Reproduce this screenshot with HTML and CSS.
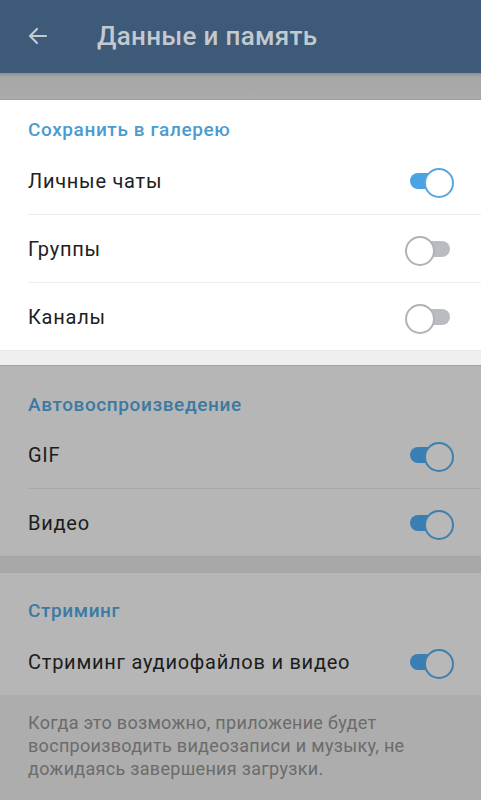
FILE: index.html
```html
<!DOCTYPE html>
<html lang="ru">
<head>
<meta charset="utf-8">
<link rel="stylesheet" href="styles.css">
</head>
<body>
<div class="screen">
  <header class="appbar">
    <svg class="back" width="24" height="24" viewBox="0 0 24 24"><path d="M20 12H5M11 5l-7 7 7 7" fill="none" stroke="currentColor" stroke-width="2.2" stroke-linecap="round" stroke-linejoin="round"/></svg>
    <h1 class="title">Данные и память</h1>
  </header>
  <div class="gap gap-top"></div>
  <section class="section light">
    <div class="sec-title">Сохранить в галерею</div>
    <div class="row"><span>Личные чаты</span><span class="toggle on"></span></div>
    <div class="row"><span>Группы</span><span class="toggle off"></span></div>
    <div class="row last"><span>Каналы</span><span class="toggle off"></span></div>
  </section>
  <div class="gap gap-light"></div>
  <section class="section dim s2">
    <div class="sec-title">Автовоспроизведение</div>
    <div class="row"><span>GIF</span><span class="toggle on"></span></div>
    <div class="row last"><span>Видео</span><span class="toggle on"></span></div>
  </section>
  <div class="gap gap-dim"></div>
  <section class="section dim s3">
    <div class="sec-title">Стриминг</div>
    <div class="row last"><span>Стриминг аудиофайлов и видео</span><span class="toggle on"></span></div>
  </section>
  <p class="hint">Когда это возможно, приложение будет воспроизводить видеозаписи и музыку, не дожидаясь завершения загрузки.</p>
</div>
</body>
</html>
```
FILE: styles.css
```css
* { box-sizing: border-box; }
html, body { margin: 0; padding: 0; }
body {
  width: 481px;
  height: 800px;
  overflow: hidden;
  background: #adadad;
  font-family: Roboto, "Noto Sans", sans-serif;
}
.screen { display: flex; flex-direction: column; }
.appbar {
  height: 73px;
  background: #3d5a78;
  display: flex;
  align-items: center;
  color: #c3c9cf;
  padding-bottom: 2px;
}
.back { margin-left: 26px; width: 24px; height: 24px; }
.title {
  margin: 0 0 0 47px;
  font-size: 26px;
  font-weight: 500;
  letter-spacing: 0.3px;
}
.gap { flex: none; }
.gap-top {
  height: 27px;
  background: linear-gradient(#8f8f8f 0, #a7a7a7 4px, #ababab 100%);
  border-bottom: 1px solid #9d9d9d;
}
.gap-light {
  height: 16px;
  background: #efefef;
  border-top: 1px solid #e6e6e6;
  border-bottom: 1px solid #a2a2a2;
}
.gap-dim {
  height: 17px;
  background: #a8a8a8;
  border-top: 1px solid #a3a3a3;
  border-bottom: 1px solid #a5a5a5;
}
.section { display: flex; flex-direction: column; }
.light { background: #ffffff; color: #212121; }
.dim { background: #b6b6b6; color: #1c1c1c; }
.sec-title {
  padding-left: 28px;
  font-size: 19px;
  font-weight: 500;
  letter-spacing: 0.6px;
  height: 47px;
  display: flex;
  align-items: flex-end;
  padding-bottom: 6px;
}
.light .sec-title { color: #4a9cd0; }
.dim .sec-title { color: #3b7aa3; height: 56px; }
.s3 .sec-title { height: 55px; }
.row {
  margin-left: 28px;
  height: 68px;
  display: flex;
  align-items: center;
  justify-content: space-between;
  font-size: 20px;
  letter-spacing: 0.75px;
  border-bottom: 1px solid #ececec;
}
.dim .row { height: 67px; border-bottom-color: #a9a9a9; }
.row.last { border-bottom: none; }
.light .row.last { height: 67px; }
.toggle {
  position: relative;
  width: 48px;
  height: 26px;
  margin-right: 27px;
  flex: none;
}
.toggle::before {
  content: "";
  position: absolute;
  top: 5px;
  height: 16px;
  border-radius: 8px;
  left: 4px;
  right: 4px;
}
.toggle::after {
  content: "";
  position: absolute;
  top: 0;
  width: 26px;
  height: 26px;
  border-radius: 50%;
  background: #fff;
  border: 2.5px solid;
}
.light .toggle.on::before { background: #4ba3e3; }
.light .toggle.on::after { right: 0; border-color: #5aa6dc; }
.dim .toggle.on::before { background: #3a7fb4; }
.dim .toggle.on::after { right: 0; border-color: #3f7fae; background: #b8b8b8; }
.toggle.off::before { background: #b9bcc1; }
.toggle.off::after { left: -1px; border-color: #b2b2b2; }
.hint {
  margin: 0;
  padding: 16px 28px 0 28px;
  font-size: 18px;
  line-height: 23px;
  letter-spacing: 0.3px;
  color: #6b6b6b;
}
```
